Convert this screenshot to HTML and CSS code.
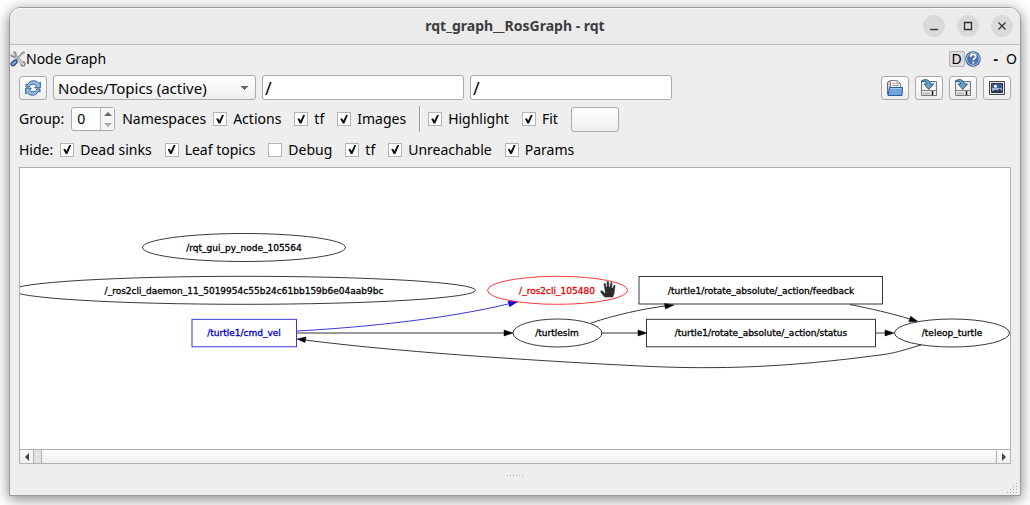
FILE: index.html
```html
<!DOCTYPE html>
<html lang="en">
<head>
<meta charset="utf-8">
<title>rqt_graph__RosGraph - rqt</title>
<link rel="stylesheet" href="styles.css">
</head>
<body>
<main class="window">
  <header class="titlebar">
    <h1 class="title">rqt_graph__RosGraph - rqt</h1>
    <div class="window-controls">
      <button class="round" aria-label="Minimize"><svg width="22" height="22"><path d="M7 14.500h8" /></svg></button>
      <button class="round" aria-label="Maximize"><svg width="22" height="22"><path d="M7.500 7.500h7v7h-7z" /></svg></button>
      <button class="round" aria-label="Close"><svg width="22" height="22"><path d="M7.500 7.500l7 7M14.500 7.500l-7 7" /></svg></button>
    </div>
  </header>

  <div class="dock-title">
    <svg class="tools" width="16" height="16" viewBox="0 0 16 16" fill="none">
      <path d="M3 3l10 10" stroke="#888" stroke-width="2.800" />
      <path d="M3 3l10 10" stroke="#e8e8e8" stroke-width="1.300" />
      <path d="M1 3.500a2.500 2.500 0 1 0 2.500-2.500M11 13a2 2 0 1 0 2-2" stroke="#888" stroke-width="1.300" />
      <path d="M14.500 1l-2 1-6 6.500" stroke="#888" stroke-width="2" />
      <path d="M13.500 1.800l-6 6" stroke="#e4e4e4" stroke-width="0.800" />
      <path d="M5 11l-2 1.800" stroke="#203f70" stroke-width="5" stroke-linecap="round" />
      <path d="M5 11l-2 1.800" stroke="#7b9fce" stroke-width="3" stroke-linecap="round" />
    </svg>
    <span class="dock-name">Node Graph</span>
    <button class="dock-d" aria-label="Dock settings">D</button>
    <button class="flat" aria-label="Help"><svg width="16" height="16" viewBox="0 0 16 16">
      <circle cx="8" cy="8" r="7.700" fill="#234a86" />
      <circle cx="8" cy="8" r="6.400" fill="#4c76b2" stroke="#cfdcf0" stroke-width="0.900" />
      <path d="M5.500 6q0-2.600 2.600-2.600t2.500 2.300c0 1.700-2.300 1.700-2.300 3.600M8.300 10.700v1.900" fill="none" stroke="#fff" stroke-width="1.700" />
    </svg></button>
    <button class="flat dash" aria-label="Minimize panel">-</button>
    <button class="flat" aria-label="Float panel">O</button>
  </div>

  <section class="panel">
    <div class="row">
      <button class="tool" aria-label="Refresh"><svg width="16" height="16" viewBox="0 0 16 16">
        <path id="turn" d="M1 7V4l1.500 1C4 2 6 .8 8.500.8c2.300 0 4 .8 5.300 2.700L15.300 2.200v5.600H9.700l1.800-1.900C10.700 4.700 9.800 4.200 8.300 4.200 6 4.200 4.700 5.300 4 7z" fill="#9dbce2" stroke="#2d5c9c" stroke-linejoin="round" />
        <use href="#turn" transform="rotate(180 8 8)" />
      </svg></button>
      <select class="combo" aria-label="Graph type"><option>Nodes/Topics (active)</option></select>
      <input class="field" type="text" value="/" aria-label="Node filter">
      <input class="field" type="text" value="/" aria-label="Topic filter">
      <div class="file-tools">
        <button class="tool" aria-label="Open"><svg width="18" height="18" viewBox="0 0 18 18">
          <path d="M1.500 15V3.500L3 2h3v13z" fill="#ccc" stroke="#666" />
          <path d="M4.500 13V1.500h6.800l3.200 3V13z" fill="#fafafa" stroke="#888" />
          <path d="M11 1.500v3.300h3.500M6.500 4.500h3M6.500 6.500h6" fill="none" stroke="#999" />
          <path d="M2 16.500l1.500-8h13l-.5 8z" fill="#6ea3dc" stroke="#2c5b9b" stroke-linejoin="round" />
          <path d="M4.200 9.500h11.300" stroke="#a8caee" />
        </svg></button>
        <button class="tool" aria-label="Save as DOT"><svg width="18" height="18" viewBox="0 0 18 18"><g id="save">
          <path d="M1.500 2.500h15v14h-15z" fill="#e8e8e8" stroke="#777" />
          <path d="M3.500 4.500h11v6h-11z" fill="#fff" />
          <path d="M2 11.500h14" stroke="#888" />
          <path d="M3 14.500h7" stroke="#bbb" stroke-width="2" />
          <path d="M12.500 12v4" stroke="#111" stroke-width="1.500" />
          <path d="M1 2.500C3-.2 9.500-.5 10.500 5H13.500L8.800 10.500 4 5H7C6.500 2.500 4 2 1 2.500z" fill="#6c9fc4" stroke="#285f86" stroke-linejoin="round" />
        </g></svg></button>
        <button class="tool" aria-label="Save as SVG"><svg width="18" height="18" viewBox="0 0 18 18"><use href="#save" /></svg></button>
        <button class="tool" aria-label="Save as image"><svg width="18" height="18" viewBox="0 0 18 18">
          <path d="M1.500 2.500h15v13h-15z" fill="#e5e5e5" stroke="#444" />
          <path d="M3.500 4.500h11v9h-11z" fill="#3b5f95" stroke="#243350" />
          <path d="M4 9h10v3H4z" fill="#9db2cd" />
          <path d="M4 12l4-1 2 .5 1.500-2 2.500 2.500v1.500H4z" fill="#263449" />
          <circle cx="7.500" cy="7.300" r="1.500" fill="#fff" />
        </svg></button>
      </div>
    </div>

    <div class="row options">
      <label for="group">Group:</label>
      <div class="spin">
        <input id="group" type="text" inputmode="numeric" value="0">
        <div class="steps">
          <button class="step" aria-label="Increase"><svg width="8" height="4"><path d="M0 4l4-4 4 4z" fill="#666" /></svg></button>
          <button class="step" aria-label="Decrease"><svg width="8" height="4"><path d="M0 0l4 4 4-4z" fill="#aaa" /></svg></button>
        </div>
      </div>
      <span class="lead">Namespaces</span>
      <div class="checks">
        <label class="check"><input type="checkbox" checked>Actions</label>
        <label class="check"><input type="checkbox" checked>tf</label>
        <label class="check"><input type="checkbox" checked>Images</label>
      </div>
      <span class="divider"></span>
      <div class="checks">
        <label class="check"><input type="checkbox" checked>Highlight</label>
        <label class="check"><input type="checkbox" checked>Fit</label>
        <button class="blank" aria-label="Fit in view"></button>
      </div>
    </div>

    <div class="row options last">
      <span class="lead">Hide:</span>
      <div class="checks">
        <label class="check"><input type="checkbox" checked>Dead sinks</label>
        <label class="check"><input type="checkbox" checked>Leaf topics</label>
        <label class="check"><input type="checkbox">Debug</label>
        <label class="check"><input type="checkbox" checked>tf</label>
        <label class="check"><input type="checkbox" checked>Unreachable</label>
        <label class="check"><input type="checkbox" checked>Params</label>
      </div>
    </div>

    <div class="view">
      <svg class="graph" viewBox="20 168 990 281" role="img" aria-label="Node graph">
        <g class="edges">
          <path class="active" d="M297 331C370 327 450 318 508 304" />
          <path d="M297 333H504" />
          <path d="M601 333H638" />
          <path d="M591 323C615 315 642 309 665 306" />
          <path d="M850 304.500C872 309 890 313 910 319" />
          <path d="M876 333H886" />
          <path d="M921 345C900 351 896 353 880 355C790 367 720 370 640 366C520 360 390 351 305 340" />
        </g>
        <g class="heads">
          <path class="active" d="M518 301.500l-8.500 5.300-1.500-5.600z" />
          <path d="M513 333l-9 3v-6z" />
          <path d="M647 333l-9 3v-6z" />
          <path d="M674 305l-8.500 4-1-5.600z" />
          <path d="M918 321.500l-9.300.3 2-5.600z" />
          <path d="M894 333l-9 3v-6z" />
          <path d="M297 339l9-2-1 5.600z" />
        </g>
        <g class="nodes">
          <ellipse cx="244" cy="247.500" rx="101.500" ry="14" />
          <ellipse cx="244" cy="290.300" rx="231.500" ry="14" />
          <ellipse class="hot" cx="557.500" cy="290.300" rx="70" ry="14" />
          <ellipse cx="557.500" cy="333" rx="44.500" ry="14" />
          <ellipse cx="952" cy="333" rx="57.500" ry="14" />
          <rect class="active" x="192" y="319.300" width="104.500" height="27.500" />
          <rect x="639" y="276.500" width="243.500" height="27.500" />
          <rect x="646.500" y="319.300" width="229" height="27.500" />
        </g>
        <g class="names">
          <text x="244" y="251">/rqt_gui_py_node_105564</text>
          <text x="244" y="294">/_ros2cli_daemon_11_5019954c55b24c61bb159b6e04aab9bc</text>
          <text class="hot" x="557" y="294">/_ros2cli_105480</text>
          <text class="active" x="244" y="336">/turtle1/cmd_vel</text>
          <text x="557" y="336">/turtlesim</text>
          <text x="761" y="294">/turtle1/rotate_absolute/_action/feedback</text>
          <text x="761" y="336">/turtle1/rotate_absolute/_action/status</text>
          <text x="952" y="336">/teleop_turtle</text>
        </g>
        <path class="hand" d="M604.500 297.500L600.500 292.500C599.500 290.800 601.500 289.500 603 291L605 293 603.600 284.500C603.500 282.500 605.500 282.300 606 284L606.600 287 606.500 282.500C606.500 280.500 609 280.500 609.200 282.500L609.500 287 610.200 283C610.500 281.200 612.600 281.500 612.500 283.500L612.300 288 613.300 285.500C614 284 615.800 284.500 615.400 286.500L614.500 294 613 297.500Z" />
      </svg>
      <div class="scrollbar">
        <button class="arrow" aria-label="Scroll left"><svg width="4" height="8"><path d="M4 0v8L0 4z" fill="#444" /></svg></button>
        <div class="track"><div class="thumb"></div></div>
        <button class="arrow" aria-label="Scroll right"><svg width="4" height="8"><path d="M0 0v8l4-4z" fill="#444" /></svg></button>
      </div>
    </div>
  </section>

  <footer class="footer">
    <svg class="dots" width="17" height="2"><path d="M0 .5h17" stroke="#aaa" stroke-dasharray="1 2" /></svg>
    <svg class="grip" width="11" height="11"><path d="M9 1.500h1M6 4.500h4M3 7.500h7M0 10.500h11" stroke="#aaa" stroke-dasharray="1 2" /></svg>
  </footer>
</main>
</body>
</html>
```
FILE: styles.css
```css
* { box-sizing: border-box; }

body {
  margin: 0;
  height: 100vh;
  padding: 7px 9px 9px;
  display: flex;
  background: #fff;
  font: 14px/20px "Noto Sans", sans-serif;
  color: #000;
  overflow: hidden;
}

button, input, select { font: inherit; color: inherit; margin: 0; padding: 0; }
svg { display: block; }

.window {
  flex: 1;
  min-width: 0;
  display: flex;
  flex-direction: column;
  background: #eee;
  border: 1px solid #999;
  border-radius: 12px 12px 0 0;
  box-shadow: 0 3px 14px rgba(0, 0, 0, 0.5);
}

.titlebar {
  height: 37px;
  flex: none;
  display: grid;
  grid-template-columns: 1fr auto 1fr;
  align-items: center;
  padding: 0 7px;
  background: #ebebeb;
  border-bottom: 1px solid #bdbdbd;
  border-radius: 11px 11px 0 0;
  box-shadow: inset 0 1px #fafafa;
}
.title { grid-column: 2; margin: 0; font-size: 14px; font-weight: 700; color: #3d3d3d; }
.window-controls { display: flex; gap: 12px; justify-content: flex-end; }
.round { width: 22px; height: 22px; border: 0; border-radius: 50%; background: #dadada; }
.round path { fill: none; stroke: #333; stroke-width: 1.3; }

.dock-title { height: 30px; flex: none; display: flex; align-items: center; padding: 0 3px 3px 0; }
.dock-name { flex: 1; }
.dock-d { width: 16px; height: 16px; line-height: 14px; border: 1px solid #b2b2b2; border-radius: 2px; background: #dedede; }
.flat { border: 0; background: none; }
.dash { font-weight: 700; padding: 0 8px 0 13px; }

.panel { flex: 1; min-height: 0; display: flex; flex-direction: column; gap: 6px; padding: 0 9px; }
.row { display: flex; align-items: center; gap: 6px; min-height: 25px; white-space: nowrap; }
.options { gap: 7px; }
.last { min-height: 23px; }

.tool, .blank, .combo {
  border: 1px solid #aaa;
  border-radius: 3px;
  background: linear-gradient(#fefefe, #eee);
}
.tool { width: 28px; height: 24px; display: grid; place-items: center; }
.blank { width: 48px; height: 25px; }
.combo {
  appearance: none;
  width: 203px;
  height: 25px;
  padding: 0 4px;
  font-size: 15px;
  background:
    linear-gradient(to bottom right, #666 50%, transparent 50%) 191px 10px / 4px 4px no-repeat,
    linear-gradient(to bottom left, #666 50%, transparent 50%) 187px 10px / 4px 4px no-repeat,
    linear-gradient(#fefefe, #eee);
}
.field { width: 202px; height: 25px; padding: 0 2px; border: 1px solid #aaa; border-radius: 3px; background: #fff; font-size: 18px; }
.file-tools { margin-left: auto; display: flex; gap: 6px; }

.spin { display: flex; width: 44px; height: 24px; border: 1px solid #aaa; border-radius: 3px; background: #fff; }
.spin input { flex: 1; min-width: 0; border: 0; padding-left: 5px; background: none; }
.steps { width: 14px; display: flex; flex-direction: column; border-left: 1px solid #bbb; background: #f5f5f5; }
.step { flex: 1; border: 0; background: none; display: grid; place-items: center; }

.checks { display: flex; align-items: center; gap: 13px; }
.check { display: flex; align-items: center; gap: 6px; }
.check input {
  appearance: none;
  width: 14px;
  height: 14px;
  border: 1px solid #b4b4b4;
  background: #fff;
  display: grid;
  place-items: center;
}
.check input:checked::before {
  content: "";
  width: 8px;
  height: 9px;
  background: #111;
  clip-path: polygon(0 48%, 24% 42%, 40% 66%, 76% 0, 100% 0, 52% 100%, 30% 100%);
}
.divider { width: 2px; height: 26px; margin: 0 0 0 6px; border-left: 1px solid #999; background: #fff; }

.view { flex: 1; min-height: 0; display: flex; flex-direction: column; border: 1px solid #b0b0b0; background: #fff; }
.graph { flex: 1; min-height: 0; width: 100%; }
.edges path, .nodes > * { fill: none; stroke: #222; stroke-width: 0.9; }
.heads path { fill: #000; stroke: #000; stroke-width: 0.5; }
.edges .active, .nodes .active { stroke: #2222d0; }
.heads .active { fill: #0000d0; stroke: #0000d0; }
.nodes .hot { stroke: #f22; }
.names text { font-family: "DejaVu Sans", sans-serif; font-size: 9px; text-anchor: middle; fill: #000; stroke: #000; stroke-width: 0.3; }
.names .active { fill: #0000c8; stroke: #0000c8; }
.names .hot { fill: #e00; stroke: #e00; }
.hand { fill: #2b2b2b; stroke: #fff; stroke-width: 0.5; }

.scrollbar { height: 14px; flex: none; display: flex; border-top: 1px solid #b0b0b0; background: linear-gradient(#fcfcfc, #f0f0f0); }
.arrow { width: 13px; border: 0; background: none; display: grid; place-items: center; }
.track { flex: 1; border: solid #b0b0b0; border-width: 0 1px; }
.thumb { width: 8px; height: 100%; background: #e2e2e2; border-right: 1px solid #b0b0b0; }

.footer { height: 31px; flex: none; display: grid; grid-template-columns: 1fr auto 1fr; padding: 0 2px 2px; }
.dots { grid-column: 2; margin-top: 11px; }
.grip { justify-self: end; align-self: end; }
```
